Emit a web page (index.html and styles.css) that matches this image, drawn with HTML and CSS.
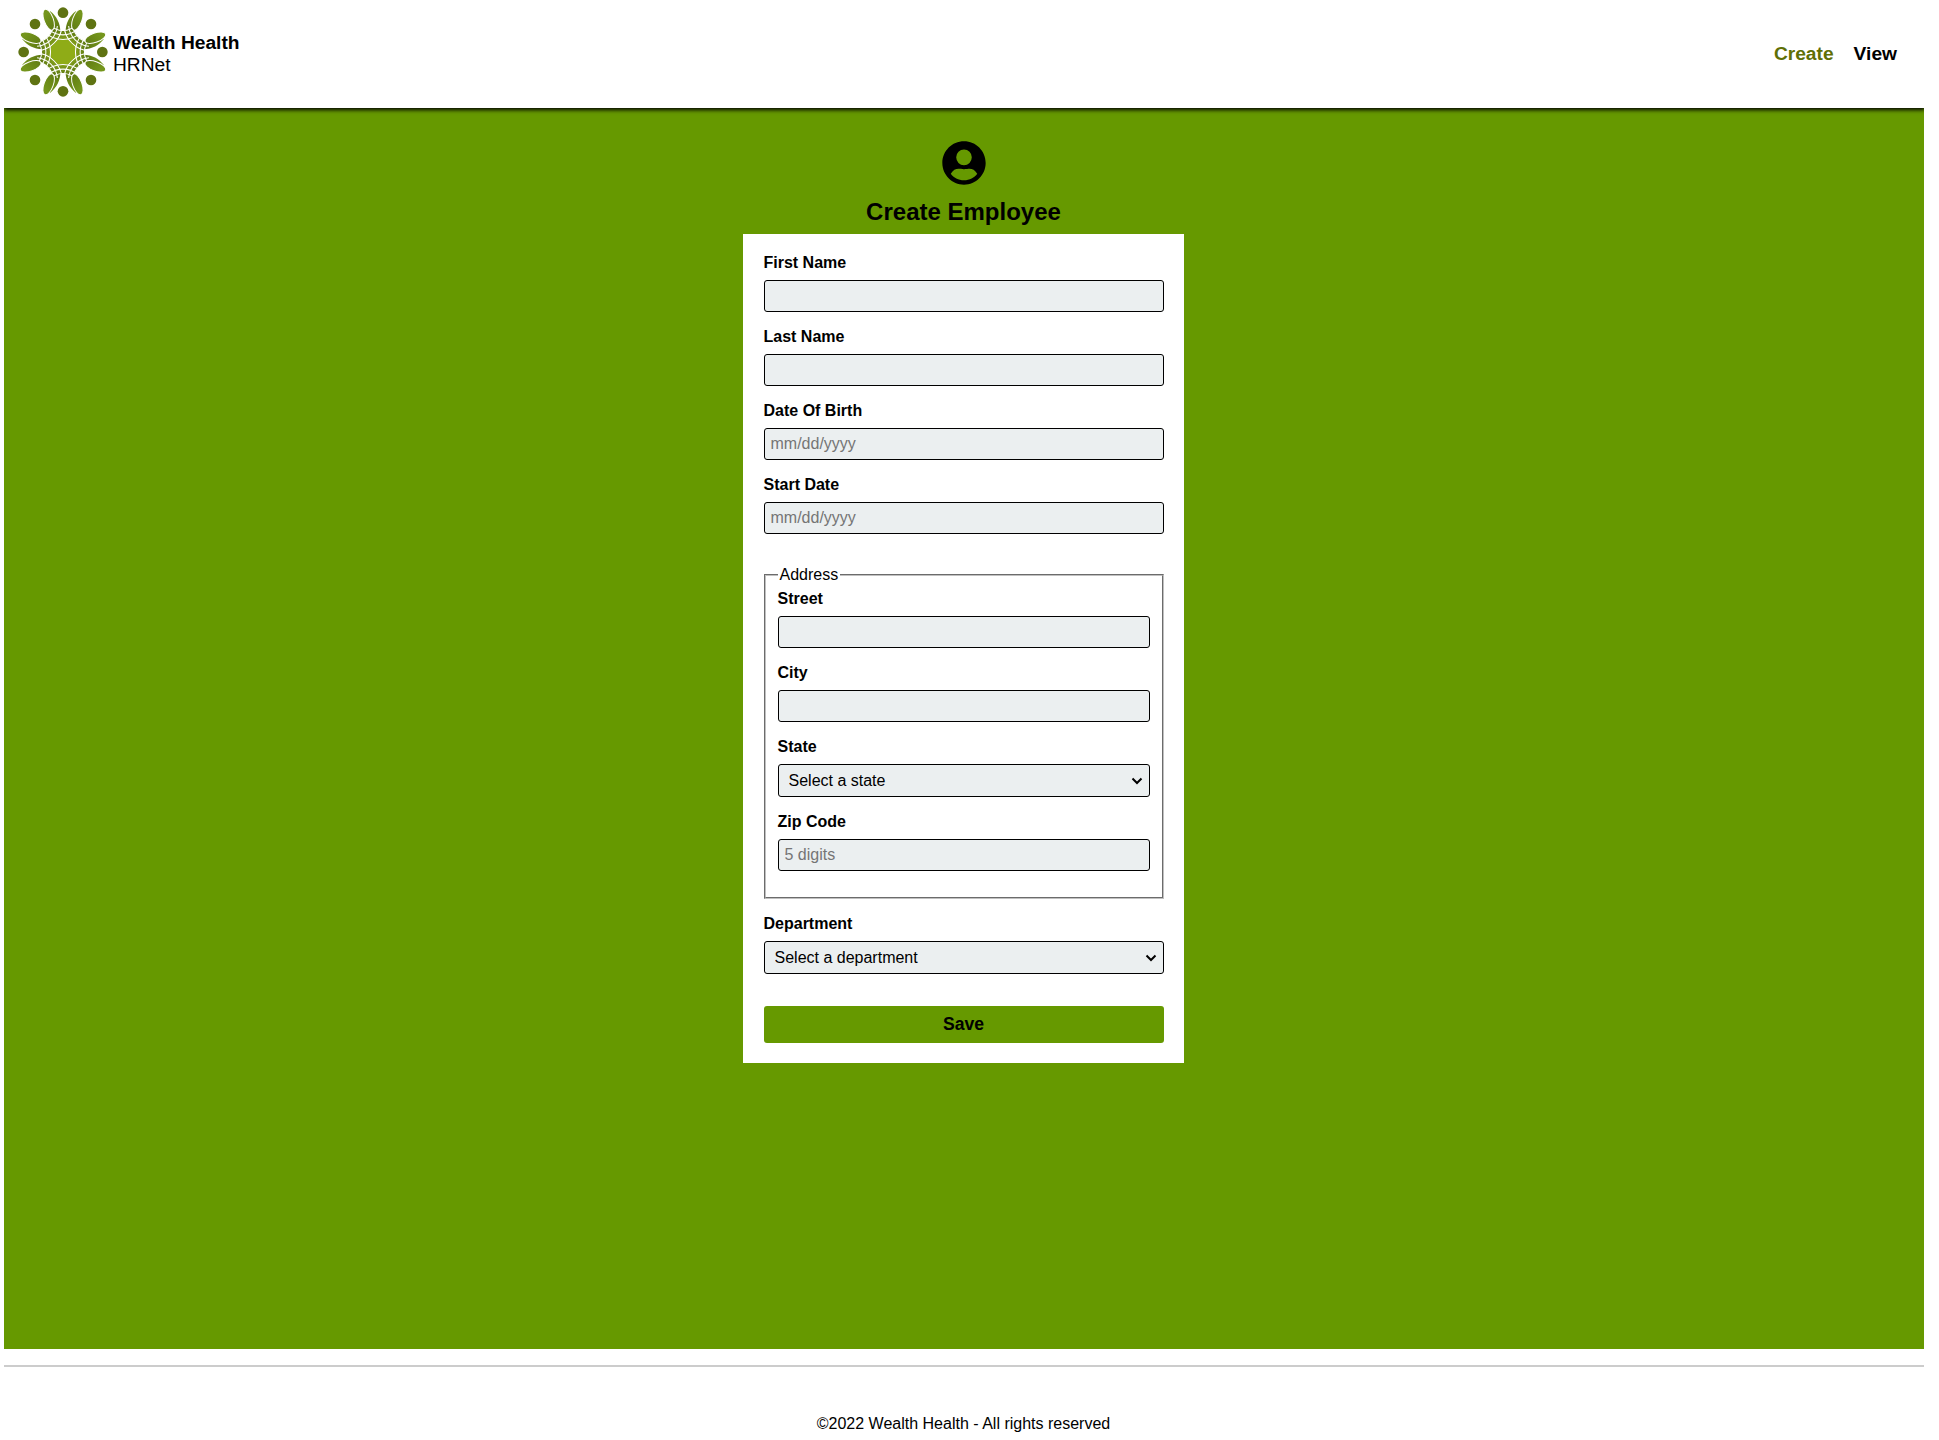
FILE: index.html
```html
<!DOCTYPE html>
<html lang="en">
<head>
<meta charset="utf-8">
<title>HRNet - Create Employee</title>
<link rel="stylesheet" href="styles.css">
</head>
<body>
<header class="header">
  <div class="brand">
    <svg class="logo" viewBox="-138 -138 276 276" aria-hidden="true">
      <defs>
        <radialGradient id="leaf" gradientUnits="userSpaceOnUse" cx="0" cy="0" r="138">
          <stop offset="0.25" stop-color="#86a31c"/>
          <stop offset="0.5" stop-color="#5f7a12"/>
          <stop offset="0.9" stop-color="#74951c"/>
        </radialGradient>
        <g id="blade"><path d="M-38 -122C-20 -108 -7 -86 -8 -58L-24 -48C-27 -75 -34 -100 -44 -118Z"/></g>
        <g id="tip"><ellipse cx="-43" cy="-97" rx="14" ry="33" transform="rotate(-20 -43 -97)"/></g>
        <g id="blades"><use href="#blade"/><use href="#blade" transform="scale(-1 1)"/></g>
        <g id="tips"><use href="#tip"/><use href="#tip" transform="scale(-1 1)"/></g>
        <g id="ring" fill="none" stroke="#fff" stroke-width="3.200">
          <path d="M-40 -82A54 54 0 0 0 40 -82M-43 -67A67 67 0 0 0 43 -67M-54 -58A81 81 0 0 0 54 -58"/>
        </g>
      </defs>
      <g fill="url(#leaf)">
        <circle r="78"/>
        <g fill="#fff"><circle cy="-118" r="54"/><circle cy="118" r="54"/><circle cx="-118" r="54"/><circle cx="118" r="54"/><circle cx="-84" cy="-84" r="54"/><circle cx="84" cy="-84" r="54"/><circle cx="-84" cy="84" r="54"/><circle cx="84" cy="84" r="54"/></g>
        <use href="#blades"/><use href="#blades" transform="rotate(90)"/><use href="#blades" transform="rotate(180)"/><use href="#blades" transform="rotate(270)"/>
      </g>
      <use href="#ring"/><use href="#ring" transform="rotate(45)"/><use href="#ring" transform="rotate(90)"/><use href="#ring" transform="rotate(135)"/><use href="#ring" transform="rotate(180)"/><use href="#ring" transform="rotate(225)"/><use href="#ring" transform="rotate(270)"/><use href="#ring" transform="rotate(315)"/>
      <g fill="url(#leaf)" stroke="#fff" stroke-width="3">
        <use href="#tips"/><use href="#tips" transform="rotate(90)"/><use href="#tips" transform="rotate(180)"/><use href="#tips" transform="rotate(270)"/>
      </g>
      <path fill="#8fac17" d="M-15 -36L15 -36L36 -15L36 15L15 36L-15 36L-36 15L-36 -15Z"/>
      <g fill="#5f7312">
        <circle cy="-118" r="16"/><circle cy="118" r="16"/><circle cx="-118" r="16"/><circle cx="118" r="16"/>
        <circle cx="-84" cy="-84" r="16"/><circle cx="84" cy="-84" r="16"/><circle cx="-84" cy="84" r="16"/><circle cx="84" cy="84" r="16"/>
      </g>
    </svg>
    <div class="brand-text"><strong>Wealth Health</strong><span>HRNet</span></div>
  </div>
  <nav class="nav"><a class="active">Create</a><a>View</a></nav>
</header>
<main class="main">
  <svg class="user-icon" viewBox="0 0 24 24" aria-hidden="true"><path d="M12 2C6.480 2 2 6.480 2 12s4.480 10 10 10 10-4.480 10-10S17.520 2 12 2zm0 3.800a3.500 3.500 0 1 1 0 7.200 3.500 3.500 0 0 1 0-7.200zm0 14.200c-2.600 0-4.800-1.200-6.100-3 1-1.700 2.200-2.300 3.600-2.300.6 0 1.400.2 2.500.2s1.900-.2 2.500-.2c1.400 0 2.600.6 3.600 2.300-1.300 1.800-3.500 3-6.100 3z"/></svg>
  <h1 class="title">Create Employee</h1>
  <form class="card">
    <div class="field"><label>First Name</label><input type="text"></div>
    <div class="field"><label>Last Name</label><input type="text"></div>
    <div class="field"><label>Date Of Birth</label><input type="text" placeholder="mm/dd/yyyy"></div>
    <div class="field"><label>Start Date</label><input type="text" placeholder="mm/dd/yyyy"></div>
    <fieldset class="address">
      <legend>Address</legend>
      <div class="field"><label>Street</label><input type="text"></div>
      <div class="field"><label>City</label><input type="text"></div>
      <div class="field"><label>State</label><select><option>Select a state</option></select></div>
      <div class="field"><label>Zip Code</label><input type="text" placeholder="5 digits"></div>
    </fieldset>
    <div class="field"><label>Department</label><select><option>Select a department</option></select></div>
    <button class="save" type="button">Save</button>
  </form>
</main>
<footer class="footer">©2022 Wealth Health - All rights reserved</footer>
</body>
</html>
```
FILE: styles.css
```css
* { box-sizing: border-box; }
body {
  margin: 0 15px 0 4px;
  height: 1440px;
  background: #fff;
  color: #000;
  font: 16px/18px "Liberation Sans", Arial, sans-serif;
}
.header {
  position: relative;
  display: flex;
  justify-content: space-between;
  align-items: center;
  height: 108px;
  padding: 0 27px 0 12.5px;
  background: #fff;
  box-shadow: 0 1px 4px 0.5px #000;
}
.brand { display: flex; align-items: center; gap: 4.5px; padding-bottom: 5px; }
.logo { width: 92px; height: 92px; }
.brand-text { display: flex; flex-direction: column; font-size: 19.2px; line-height: 22px; padding-top: 4px; }
.nav { display: flex; gap: 20px; font-size: 19.2px; font-weight: bold; line-height: 22px; }
.active { color: #5f6f06; }
.main {
  display: flex;
  flex-direction: column;
  align-items: center;
  height: 1241px;
  padding: 29px 1px 0 0;
  background: #690;
}
.user-icon { width: 52px; height: 52px; }
.title { margin: 9px 0; font-size: 24px; line-height: 27px; }
.card { width: 441px; height: 829px; margin-right: 1px; padding: 20px 20px 20px 21px; background: #fff; }
.field { display: flex; flex-direction: column; gap: 8px; margin-bottom: 16px; }
.field label { font-weight: bold; }
input, select {
  width: 100%;
  height: 32px;
  margin: 0;
  border: 1px solid #000;
  border-radius: 3px;
  background-color: #ebeff0;
  color: #000;
  font: inherit;
  padding: 0 6px;
}
select {
  height: 33px;
  padding: 0 10px;
  appearance: none;
  background-image: url("data:image/svg+xml,%3Csvg xmlns='http://www.w3.org/2000/svg' width='12' height='8'%3E%3Cpath d='M1.500 1.500L6 6L10.500 1.500' fill='none' stroke='%23000' stroke-width='2'/%3E%3C/svg%3E");
  background-repeat: no-repeat;
  background-position: right 6px center;
}
input::placeholder { color: #757575; }
.address {
  min-width: 0;
  height: 333px;
  margin: 32px 0 16px;
  padding: 6px 12px 0;
  border: 2px groove #c0c0c0;
}
.address legend { padding: 0 2px; }
.save {
  display: block;
  width: 100%;
  height: 37px;
  margin-top: 32px;
  padding: 0 0 2px;
  border: 0;
  border-radius: 3px;
  background: #690;
  color: #000;
  font: bold 17.6px/20px "Liberation Sans", Arial, sans-serif;
}
.footer {
  height: 75px;
  margin-top: 16px;
  padding: 48px 1px 0 0;
  border-top: 2px solid #ccc;
  text-align: center;
}
```
